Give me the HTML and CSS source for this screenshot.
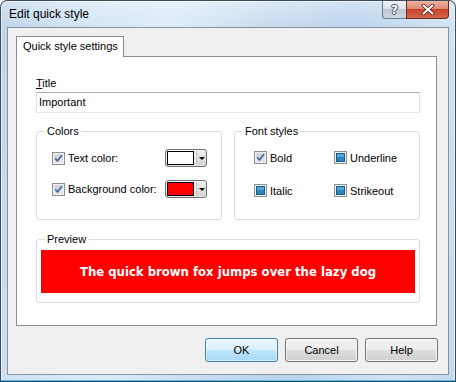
FILE: index.html
```html
<!DOCTYPE html>
<html>
<head>
<meta charset="utf-8">
<title>Edit quick style</title>
<link rel="stylesheet" href="styles.css">
</head>
<body>
<div class="window">
  <div class="titlebar">
    <span class="title">Edit quick style</span>
    <div class="caption">
      <div class="cap cap-help">?</div>
      <div class="cap cap-close">
        <svg width="14" height="11" viewBox="0 0 14 11">
          <path d="M2.5 1.5 L11.5 9.5 M11.5 1.5 L2.5 9.5" stroke="#5a1d14" stroke-width="3.6" stroke-linecap="round"/>
          <path d="M2.5 1.5 L11.5 9.5 M11.5 1.5 L2.5 9.5" stroke="#ffffff" stroke-width="2" stroke-linecap="round"/>
        </svg>
      </div>
    </div>
  </div>
  <div class="client">
    <div class="tabs"><div class="tab">Quick style settings</div></div>
    <div class="panel">
      <label class="field-label"><u>T</u>itle</label>
      <div class="input">Important</div>
      <div class="groups">
        <fieldset class="group colors">
          <legend>Colors</legend>
          <div class="colors-body">
            <div class="row">
              <svg class="cb" width="13" height="13" viewBox="0 0 13 13">
                <rect x=".5" y=".5" width="12" height="12" fill="#f2f2f2" stroke="#8e8f8f"/>
                <rect x="2" y="2" width="9" height="9" fill="#e2e4e7"/>
                <rect x="2" y="2" width="9" height="4" fill="#d3d6da"/>
                <path d="M3.2 6.4 L5.5 8.9 L9.9 3.2" fill="none" stroke="#4c6aa8" stroke-width="1.8"/>
              </svg>
              <span class="text">Text color:</span>
              <div class="colorbtn"><span class="swatch white"></span><span class="arrow"><i></i></span></div>
            </div>
            <div class="row">
              <svg class="cb" width="13" height="13" viewBox="0 0 13 13">
                <rect x=".5" y=".5" width="12" height="12" fill="#f2f2f2" stroke="#8e8f8f"/>
                <rect x="2" y="2" width="9" height="9" fill="#e2e4e7"/>
                <rect x="2" y="2" width="9" height="4" fill="#d3d6da"/>
                <path d="M3.2 6.4 L5.5 8.9 L9.9 3.2" fill="none" stroke="#4c6aa8" stroke-width="1.8"/>
              </svg>
              <span class="text">Background color:</span>
              <div class="colorbtn"><span class="swatch red"></span><span class="arrow"><i></i></span></div>
            </div>
          </div>
        </fieldset>
        <fieldset class="group fonts">
          <legend>Font styles</legend>
          <div class="fonts-body">
            <div class="item">
              <svg class="cb" width="13" height="13" viewBox="0 0 13 13">
                <rect x=".5" y=".5" width="12" height="12" fill="#f2f2f2" stroke="#8e8f8f"/>
                <rect x="2" y="2" width="9" height="9" fill="#e2e4e7"/>
                <rect x="2" y="2" width="9" height="4" fill="#d3d6da"/>
                <path d="M3.2 6.4 L5.5 8.9 L9.9 3.2" fill="none" stroke="#4c6aa8" stroke-width="1.8"/>
              </svg>
              <span>Bold</span>
            </div>
            <div class="item">
              <svg class="cb" width="13" height="13" viewBox="0 0 13 13">
                <rect x=".5" y=".5" width="12" height="12" fill="#f4f4f4" stroke="#8e8f8f"/>
                <rect x="2.5" y="2.5" width="8" height="8" fill="#2a84bf" stroke="#1b5883"/>
                <rect x="3" y="3" width="7" height="3" fill="#52a8d8"/>
              </svg>
              <span>Underline</span>
            </div>
            <div class="item">
              <svg class="cb" width="13" height="13" viewBox="0 0 13 13">
                <rect x=".5" y=".5" width="12" height="12" fill="#f4f4f4" stroke="#8e8f8f"/>
                <rect x="2.5" y="2.5" width="8" height="8" fill="#2a84bf" stroke="#1b5883"/>
                <rect x="3" y="3" width="7" height="3" fill="#52a8d8"/>
              </svg>
              <span>Italic</span>
            </div>
            <div class="item">
              <svg class="cb" width="13" height="13" viewBox="0 0 13 13">
                <rect x=".5" y=".5" width="12" height="12" fill="#f4f4f4" stroke="#8e8f8f"/>
                <rect x="2.5" y="2.5" width="8" height="8" fill="#2a84bf" stroke="#1b5883"/>
                <rect x="3" y="3" width="7" height="3" fill="#52a8d8"/>
              </svg>
              <span>Strikeout</span>
            </div>
          </div>
        </fieldset>
      </div>
      <fieldset class="group preview">
        <legend>Preview</legend>
        <div class="preview-box">The quick brown fox jumps over the lazy dog</div>
      </fieldset>
    </div>
    <div class="buttons">
      <div class="btn default">OK</div>
      <div class="btn">Cancel</div>
      <div class="btn">Help</div>
    </div>
  </div>
</div>
</body>
</html>
```
FILE: styles.css
```css
* { box-sizing: border-box; }
html, body { margin: 0; padding: 0; }
body {
  width: 456px;
  height: 382px;
  overflow: hidden;
  font-family: "Liberation Sans", Arial, sans-serif;
  font-size: 11px;
  color: #000;
  background: #ffffff;
}
.window {
  width: 456px;
  height: 382px;
  border: 1px solid #3e4c5b;
  border-bottom-color: #23435e;
  border-radius: 7px 7px 0 0;
  display: flex;
  flex-direction: column;
  background:
    linear-gradient(to bottom, rgba(255,255,255,0.35), rgba(255,255,255,0) 28px),
    linear-gradient(100deg, #bdd4ea 0%, #d3e4f4 18%, #dcebf8 33%, #c7dcf0 52%, #b9d3ec 68%, #d0e3f4 88%, #c3d9ee 100%);
  box-shadow: inset 0 -1px 0 #5cc0ee, inset 0 0 0 1px rgba(255,255,255,0.55);
}
.titlebar {
  height: 26px;
  display: flex;
  padding-left: 8px;
}
.title {
  font-size: 12px;
  line-height: 15px;
  padding-top: 6px;
  color: #000;
}
.caption {
  margin-left: auto;
  margin-right: 6px;
  display: flex;
  align-self: flex-start;
}
.cap {
  height: 18px;
  border: 1px solid;
  border-top: 0;
  display: flex;
  align-items: center;
  justify-content: center;
}
.cap-help {
  width: 24px;
  border-color: #6c7a8a;
  border-right: 0;
  border-radius: 0 0 0 4px;
  background: linear-gradient(#eef2f6 0%, #dbe2ea 45%, #bcc8d5 50%, #cdd7e2 100%);
  color: #ffffff;
  font-family: "DejaVu Sans", sans-serif;
  font-weight: bold;
  font-size: 12px;
  line-height: 14px;
  text-shadow: 1px 0 0 #4b5562, -1px 0 0 #4b5562, 0 1px 0 #4b5562, 0 -1px 0 #4b5562;
}
.cap-close {
  width: 43px;
  border-color: #6b281d;
  border-radius: 0 0 4px 0;
  background: linear-gradient(#ecb2a3 0%, #de8b75 45%, #c8442c 50%, #d4664a 100%);
}
.client {
  margin-left: 6px;
  width: 442px;
  height: 348px;
  background: #f0f0f0;
  border: 1px solid #8a929b;
  padding: 8px 10px 0 8px;
}
.tabs { display: flex; }
.tab {
  position: relative;
  z-index: 1;
  width: 108px;
  height: 21px;
  margin-bottom: -1px;
  border: 1px solid #898c95;
  border-bottom: 0;
  background: #ffffff;
  padding-left: 6px;
  line-height: 18px;
}
.panel {
  width: 421px;
  height: 270px;
  border: 1px solid #898c95;
  background: #ffffff;
  padding: 19px 16px 0 19px;
}
.field-label {
  display: block;
  height: 14px;
  line-height: 14px;
}
.input {
  margin-top: 2px;
  width: 384px;
  height: 21px;
  border: 1px solid;
  border-color: #abadb3 #dbdfe6 #e3e9ef #e2e3ea;
  padding-left: 2px;
  line-height: 19px;
}
.groups {
  display: flex;
  gap: 12px;
  margin-top: 12px;
}
.group {
  margin: 0;
  padding: 0;
  min-width: 0;
  border: 1px solid #d5dfe5;
  border-radius: 3px;
}
.group legend {
  margin-left: 8px;
  padding: 0 2px;
  line-height: 13px;
}
.colors, .fonts {
  width: 186px;
  height: 95px;
}
.colors-body {
  display: flex;
  flex-direction: column;
  gap: 13px;
  padding: 11px 14px 0 15px;
}
.row {
  display: flex;
  align-items: center;
  height: 18px;
}
.cb {
  flex: none;
  display: block;
  margin-right: 3px;
}
.row .text { flex: 1; }
.colorbtn {
  width: 42px;
  height: 18px;
  border: 1px solid #707070;
  border-radius: 3px;
  background: linear-gradient(#f7f7f7, #e6e6e6);
  display: flex;
  padding: 1px 0 1px 1px;
}
.swatch {
  width: 27px;
  height: 14px;
  border: 1px solid #000;
}
.swatch.white { background: #ffffff; }
.swatch.red { background: #ff0000; }
.arrow {
  flex: 1;
  margin-left: 2px;
  border-left: 1px solid #c4c4c4;
  background: linear-gradient(#ececec, #d6d6d6);
  display: flex;
  align-items: center;
  justify-content: center;
  border-radius: 0 2px 2px 0;
}
.arrow i {
  width: 0;
  height: 0;
  border-left: 3px solid transparent;
  border-right: 3px solid transparent;
  border-top: 3px solid #000;
}
.fonts-body {
  display: grid;
  grid-template-columns: 80px 80px;
  grid-auto-rows: 19px;
  row-gap: 14px;
  padding: 10px 0 0 19px;
}
.item {
  display: flex;
  align-items: center;
}
.preview {
  margin-top: 13px;
  width: 384px;
  height: 70px;
}
.preview-box {
  margin: 4px 4px 0 4px;
  height: 43px;
  background: #ff0000;
  color: #ffffff;
  font-family: "DejaVu Sans", sans-serif;
  font-weight: bold;
  font-size: 11.7px;
  display: flex;
  align-items: center;
  justify-content: center;
}
.buttons {
  display: flex;
  justify-content: flex-end;
  gap: 7px;
  margin-top: 12px;
}
.btn {
  width: 73px;
  height: 24px;
  border: 1px solid #707070;
  border-radius: 3px;
  background: linear-gradient(#f2f2f2 0%, #ebebeb 50%, #dddddd 50%, #cfcfcf 100%);
  box-shadow: inset 0 0 0 1px rgba(255,255,255,0.8);
  text-align: center;
  line-height: 22px;
}
.btn.default {
  border-color: #3c7fb1;
  background: linear-gradient(#eaf6fd 0%, #d9f0fc 50%, #bee6fd 50%, #a7d9f5 100%);
  box-shadow: inset 0 0 0 1px rgba(255,255,255,0.6);
}
```
